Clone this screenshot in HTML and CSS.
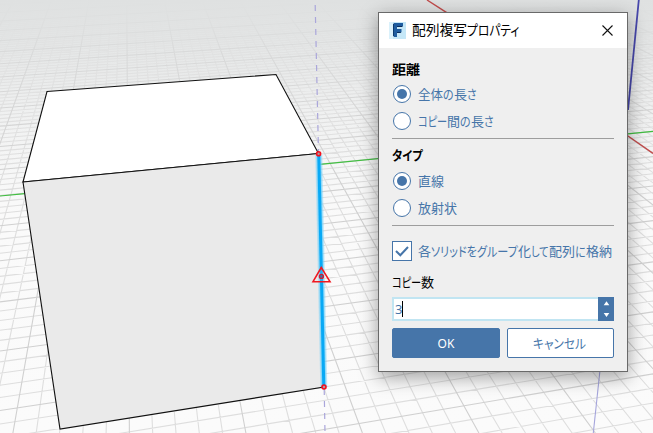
FILE: index.html
```html
<!DOCTYPE html>
<html lang="ja">
<head>
<meta charset="utf-8">
<title>配列複写プロパティ</title>
<link rel="stylesheet" href="styles.css">
</head>
<body>
<main class="viewport">
  <svg class="scene" width="653" height="433" viewBox="0 0 653 433">
    <defs>
      <linearGradient id="haze" x1="0" y1="0" x2="0" y2="1">
        <stop offset="0" stop-color="#dfe1e1" stop-opacity="1"/>
        <stop offset=".12" stop-color="#e4e6e6" stop-opacity=".45"/>
        <stop offset=".4" stop-color="#eee" stop-opacity="0"/>
      </linearGradient>
    </defs>
    <path id="minor" class="grid-minor"/>
    <path id="major" class="grid-major"/>
    <rect width="653" height="433" fill="url(#haze)"/>
    <path class="axis-y" d="M0 196L25 193.600M320 164.400L653 131.300"/>
    <path class="axis-x" d="M427 0L446.700 12.700L628 136L653 153.300"/>
    <path class="axis-z" d="M638.800 0L628 110"/>
    <path class="axis-z-below" d="M600 370L593.300 433"/>
    <path class="guide" d="M315.200 5L318.500 153"/>
    <path class="guide" d="M324.200 389L325 433"/>
    <path class="top-face" d="M47 91.500L276 74.500L318.500 153.500L23 182Z"/>
    <path class="front-face" d="M23 182L318.500 153.500L324 387L60 429Z"/>
    <path class="edge-glow outer" d="M318.800 155L323.800 387"/>
    <path class="edge-glow inner" d="M318.800 155L323.800 387"/>
    <path class="edge" d="M318.800 155L323.800 387"/>
    <circle class="vertex" cx="318.600" cy="153.800" r="2"/>
    <circle class="vertex" cx="324" cy="387" r="2"/>
    <path class="marker" d="M321.300 267.500L313 281.700H330Z"/>
    <circle class="marker-dot" cx="321.400" cy="276.400" r="2"/>
  </svg>

  <section class="dialog">
    <header class="titlebar">
      <svg class="logo" width="17" height="17" viewBox="0 0 17 17">
        <rect width="17" height="17" fill="#c5e7f7"/>
        <path d="M0 0H4V17H0Z" fill="#daf1fb"/>
        <path d="M4 2L6 1V15L4 14Z" fill="#0b3b70"/>
        <path d="M5 1H14V4H8V7H12.500V10H8V15H5Z" fill="#1e5c9f"/>
        <path d="M8 4H14L13 5H8ZM8 10H12.500L11.500 11H8Z" fill="#0a2d5c"/>
      </svg>
      <h1><span data-w="55">配列複写</span><span data-w="52">プロパティ</span></h1>
      <svg class="close" width="11" height="11" viewBox="0 0 11 11"><path d="M.5 .5L10.500 10.500M10.500 .5L.5 10.500"/></svg>
    </header>
    <div class="content">
      <h2><span data-w="28">距離</span></h2>
      <label class="option"><i class="radio on"></i><span data-w="25">全体</span><span data-w="11">の</span><span data-w="13">長</span><span data-w="10">さ</span></label>
      <label class="option next"><i class="radio"></i><span data-w="29">コピー</span><span data-w="13">間</span><span data-w="11">の</span><span data-w="13">長</span><span data-w="10">さ</span></label>
      <hr>
      <h2 class="type"><span data-w="31">タイプ</span></h2>
      <label class="option type"><i class="radio on"></i><span data-w="26">直線</span></label>
      <label class="option next"><i class="radio"></i><span data-w="39">放射状</span></label>
      <hr>
      <label class="check"><svg width="20" height="20" viewBox="0 0 20 20"><rect x=".5" y=".5" width="19" height="19"/><path d="M4 10L8.300 14.300L16 6"/></svg><span data-w="13">各</span><span data-w="87">ソリッドをグループ</span><span data-w="13">化</span><span data-w="18">して</span><span data-w="26">配列</span><span data-w="11">に</span><span data-w="26">格納</span></label>
      <div class="count-label"><span data-w="29">コピー</span><span data-w="13">数</span></div>
      <div class="stepper">
        <div class="field">3<i class="caret"></i></div>
        <svg width="16" height="24" viewBox="0 0 16 24"><path d="M8.500 4.300L11.300 8.300H5.700ZM8.500 20L5.700 16H11.300Z"/></svg>
      </div>
      <div class="buttons">
        <button class="primary">OK</button>
        <button class="secondary"><span data-w="53">キャンセル</span></button>
      </div>
    </div>
  </section>
</main>
<script src="scene.js"></script>
</body>
</html>
```

FILE: styles.css
```css
* { box-sizing: border-box; }
body { margin: 0; overflow: hidden; font-family: "Noto Sans", "Noto Sans CJK JP", sans-serif; font-size: 13px; color: #4675a9; }
.viewport { position: relative; width: 653px; height: 433px; background: linear-gradient(#dfe1e1, #f1f2f2 25%, #fafafa 50%, #fbfbfb); }
.scene { display: block; }
.scene path { fill: none; }
.scene .grid-minor { stroke: #dedede; stroke-width: 1.1; }
.scene .grid-major { stroke: #d0d0d0; stroke-width: 1.1; }
.scene .axis-y { stroke: #42bf42; stroke-width: 1.2; }
.scene .axis-x { stroke: #c24c4c; stroke-width: 1.4; }
.scene .axis-z { stroke: #4848ac; stroke-width: 1.8; }
.scene .axis-z-below { stroke: #a5a5dc; stroke-width: 1.1; }
.scene .guide { stroke: #aaa6db; stroke-width: 1.2; stroke-dasharray: 6 6; }
.scene .top-face { fill: #fff; stroke: #111; stroke-width: 1.1; }
.scene .front-face { fill: #eaeaea; stroke: #111; stroke-width: 1.1; }
.scene .edge-glow { stroke: #6fd0fa; }
.scene .outer { stroke-width: 7; opacity: .4; }
.scene .inner { stroke-width: 5; opacity: .65; }
.scene .edge { stroke: #08a9f5; stroke-width: 3; }
.vertex { fill: #a898a4; stroke: #f5101c; stroke-width: 1.6; }
.scene .marker { fill: rgba(255,220,220,.15); stroke: #f01820; stroke-width: 1.6; }
.marker-dot { fill: #3b76a9; stroke: #cf1c36; stroke-width: 1.4; }

.dialog { position: absolute; left: 378px; top: 12px; width: 250px; height: 360px; border: 1px solid #696969; background: #efefef; box-shadow: 0 5px 18px rgba(0,0,0,.38); }
.titlebar { display: flex; align-items: center; height: 35px; padding: 0 14px 0 10px; background: #fff; color: #000; }
.logo { margin-right: 6px; }
.titlebar h1 { display: flex; flex: 1; height: 22px; margin: 0; font-size: 14px; font-weight: 400; line-height: 20px; }
.close path { fill: none; stroke: #111; stroke-width: 1.1; }
.content { padding: 12px 13px 0; }
[data-w] { display: inline-block; white-space: nowrap; font-feature-settings: "palt"; text-align: left; }
.glyphs { display: inline-block; transform-origin: 0 50%; }
h2 { display: flex; margin: 0; height: 20px; line-height: 18px; font-size: 13px; font-weight: 700; color: #000; }
h2.type { margin-top: 7px; }
.option { display: flex; align-items: center; height: 18px; margin-top: 5px; padding-left: 1px; line-height: 18px; }
.option.next { margin-top: 9px; }
.option.type { margin-top: 6px; }
.radio { display: grid; place-items: center; width: 18px; height: 18px; margin-right: 7px; border: 1px solid #4675a9; border-radius: 50%; background: #fff; }
.radio.on::after { content: ""; width: 10px; height: 10px; border-radius: 50%; background: #4675a9; }
hr { height: 1px; margin: 8px 0 0; border: 0; background: #9d9d9d; }
.check { display: flex; align-items: center; height: 20px; margin-top: 15px; line-height: 20px; }
.check svg { margin-right: 6px; }
.check rect { fill: #fff; stroke: #4675a9; }
.check path { fill: none; stroke: #4675a9; stroke-width: 2; }
.count-label { display: flex; height: 20px; margin-top: 12px; line-height: 18px; color: #000; }
.stepper { display: flex; height: 24px; margin-top: 4px; }
.field { display: flex; align-items: center; flex: 1; padding-left: 1px; border: 2px solid #c1e5f2; border-right: 0; background: #fff; font-size: 13px; }
.caret { width: 1px; height: 16px; background: #000; }
.stepper svg { background: #4675a9; }
.stepper path { fill: #fff; }
.buttons { display: grid; grid-template-columns: 108px 107px; gap: 7px; margin-top: 7px; }
button { height: 30px; padding: 0; border: 1px solid #4675a9; border-radius: 2px; font: inherit; }
.primary { background: #4675a9; color: #fff; font-size: 12px; }
.secondary { padding: 0 3px 2px 0; background: #fff; color: #4675a9; }
```

FILE: scene.js
```js
// Ground plane in perspective: both line families converge on one horizon.
const horizon = -207, depthX = 125.5, sideX = 4090;
const paths = { minor: '', major: '' };
for (let i = -50; i <= 90; i++) {
  const x = 129.4 + i * 23.3, f = (0 - horizon) / (433 - horizon);
  const x0 = depthX + (x - depthX) * f;
  paths[i % 5 ? 'minor' : 'major'] += `M${x0.toFixed(2)} 0L${x.toFixed(2)} 433`;
}
for (let j = -34; j <= 75; j++) {
  const y = horizon + 1 / (0.0024835 + j * 0.00003456);
  const y1 = horizon + (y - horizon) * (sideX - 653) / sideX;
  paths[j % 5 ? 'minor' : 'major'] += `M0 ${y.toFixed(2)}L653 ${y1.toFixed(2)}`;
}
document.getElementById('minor').setAttribute('d', paths.minor);
document.getElementById('major').setAttribute('d', paths.major);

// Condense each text run to its proportional-gothic width.
document.querySelectorAll('[data-w]').forEach(run => {
  const glyphs = document.createElement('span');
  glyphs.className = 'glyphs';
  glyphs.textContent = run.textContent;
  run.replaceChildren(glyphs);
  const scale = run.dataset.w / glyphs.offsetWidth;
  run.style.width = run.dataset.w + 'px';
  glyphs.style.transform = `scaleX(${scale})`;
});
```
